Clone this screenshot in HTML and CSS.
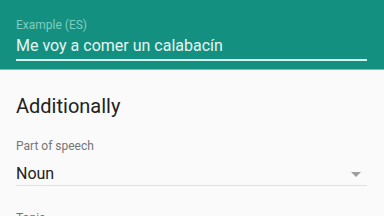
FILE: index.html
```html
<!DOCTYPE html>
<html lang="en">
  <head>
    <meta charset="UTF-8" />
    <meta name="viewport" content="width=device-width, initial-scale=1.0" />
    <title>Add word</title>
    <link rel="stylesheet" href="styles.css">
  </head>
  <body>
    <header class="header">
      <div class="field-label">Example (ES)</div>
      <div class="field-input">Me voy a comer un calabacín</div>
    </header>

    <main class="content">
      <h2 class="section-title">Additionally</h2>

      <div class="field">
        <div class="label">Part of speech</div>
        <div class="select">
          <span class="value">Noun</span>
          <span class="arrow"></span>
        </div>
      </div>

      <div class="field">
        <div class="label">Topic</div>
      </div>
    </main>
  </body>
</html>
```
FILE: styles.css
```css
* {
  margin: 0;
  padding: 0;
  box-sizing: border-box;
}
body {
  background-color: #fafafa;
  color: #212121;
  font-family: Roboto, "Noto Sans", sans-serif;
  overflow: hidden;
}
/* header with input */
.header {
  background: #139080;
  padding: 17px 17px 8px 16px;
  border-bottom: 1px solid #6fc2b6;
}
.field-label {
  font-size: 12px;
  line-height: 16px;
  color: #80cdc0;
}
.field-input {
  margin-top: 1px;
  font-size: 16px;
  line-height: 24px;
  color: #e6f6f3;
  padding-bottom: 1px;
  border-bottom: 2px solid #d6f5f0;
}
/* form */
.content {
  padding: 0 17px 0 16px;
}
.section-title {
  margin-top: 22px;
  font-size: 20px;
  line-height: 28px;
  font-weight: 400;
  color: #212121;
}
.field {
  margin-top: 18px;
}
.field + .field {
  margin-top: 24px;
}
.label {
  font-size: 12px;
  line-height: 16px;
  color: #757575;
}
.select {
  margin-top: 9px;
  display: flex;
  align-items: center;
  justify-content: space-between;
  border-bottom: 1px solid #e0e0e0;
}
.value {
  font-size: 16px;
  line-height: 22px;
}
.arrow {
  width: 0;
  height: 0;
  margin-right: 6px;
  border-left: 5px solid transparent;
  border-right: 5px solid transparent;
  border-top: 5px solid #9e9e9e;
}
```
